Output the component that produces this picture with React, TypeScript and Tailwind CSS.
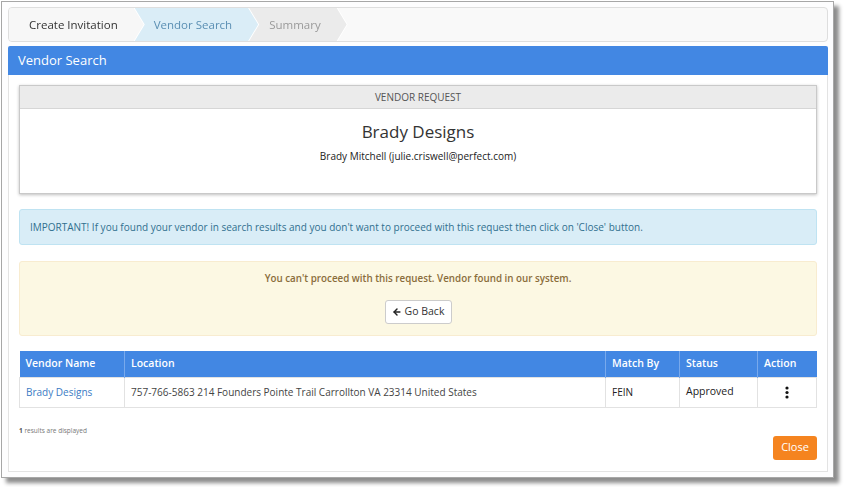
import { ArrowLeft } from 'lucide-react'

const steps = [
  { label: 'Create Invitation', bg: 'bg-[#f7f7f7]', text: 'text-[#333333]', pad: 'pl-[20px] pr-[26px]', z: 'z-30', first: true },
  { label: 'Vendor Search', bg: 'bg-[#daedf7]', text: 'text-[#5a8fb3]', pad: 'pl-[20px] pr-[26px]', z: 'z-20', first: false },
  { label: 'Summary', bg: 'bg-[#ebebeb]', text: 'text-[#9a9a9a]', pad: 'pl-[21px] pr-[26px]', z: 'z-10', first: false },
]

const rows = [
  {
    name: 'Brady Designs',
    location: '757-766-5863 214 Founders Pointe Trail Carrollton VA 23314 United States',
    matchBy: 'FEIN',
    status: 'Approved',
  },
]

function KebabIcon() {
  return (
    <svg width="4" height="13" viewBox="0 0 4 13" className="mx-auto">
      <circle cx="2" cy="2" r="1.6" fill="#111" />
      <circle cx="2" cy="6.5" r="1.6" fill="#111" />
      <circle cx="2" cy="11" r="1.6" fill="#111" />
    </svg>
  )
}

export default function App() {
  return (
    <div className="w-[846px] h-[487px] bg-white font-['Open_Sans',sans-serif]">
      <div className="ml-[1px] mt-[1px] w-[833px] h-[477px] border border-[#a7a7a7] bg-[#fdfdfe] shadow-[5px_5px_4px_rgba(0,0,0,0.45)] pl-[6px] pr-[5px] pt-[5px]">
        {/* wizard steps */}
        <div className="flex h-[35px] rounded-[4px] border border-[#dedede] bg-[#f9f9f9] overflow-hidden">
          {steps.map((s) => (
            <div key={s.label} className={`relative ${s.z} ${s.first ? '' : '-ml-[10px]'} [filter:drop-shadow(1px_0_0_#ffffff)]`}>
              <div
                className={`h-full flex items-center text-[11.5px] ${s.bg} ${s.text} ${s.pad} ${
                  s.first
                    ? '[clip-path:polygon(0_0,calc(100%-10px)_0,100%_50%,calc(100%-10px)_100%,0_100%)]'
                    : '[clip-path:polygon(0_0,calc(100%-10px)_0,100%_50%,calc(100%-10px)_100%,0_100%,10px_50%)]'
                }`}
              >
                {s.label}
              </div>
            </div>
          ))}
        </div>

        {/* panel */}
        <div className="mt-[4px]">
          <div className="h-[29px] bg-[#4287e3] rounded-t-[2px] flex items-center pl-[10px] text-[13px] text-white">
            Vendor Search
          </div>
          <div className="bg-white border border-t-0 border-[#e3e3e3] px-[10px] pt-[10px] pb-[11px]">
            {/* vendor request card */}
            <div className="border border-[#c9c9c9] shadow-[0_1px_3px_rgba(0,0,0,0.25)] bg-white">
              <div className="h-[23px] bg-[#ebebeb] border-b border-[#d6d6d6] flex items-center justify-center text-[10px] text-[#555555] uppercase">
                Vendor Request
              </div>
              <div className="h-[84px] flex flex-col items-center pt-[11px]">
                <div className="text-[17px] leading-[24px] text-[#333333]">Brady Designs</div>
                <div className="mt-[5px] text-[10px] leading-[14px] font-medium text-[#222222]">
                  Brady Mitchell (julie.criswell@perfect.com)
                </div>
              </div>
            </div>

            {/* info */}
            <div className="mt-[15px] h-[36px] rounded-[3px] border border-[#bfe3f2] bg-[#d9edf7] flex items-center pl-[10px] text-[10px] text-[#31708f]">
              IMPORTANT! If you found your vendor in search results and you don't want to proceed with this request then click on 'Close' button.
            </div>

            {/* warning */}
            <div className="mt-[16px] h-[75px] rounded-[3px] border border-[#f8ecd0] bg-[#fcf8e3] flex flex-col items-center pt-[10px]">
              <div className="text-[9.8px] leading-[14px] font-semibold text-[#8a6d3b]">
                You can't proceed with this request. Vendor found in our system.
              </div>
              <button className="mt-[14px] h-[24px] w-[67px] rounded-[3px] border border-[#cccccc] bg-white flex items-center justify-center gap-[3px] text-[10.5px] text-[#333333]">
                <ArrowLeft size={10} strokeWidth={3.5} className="text-[#222]" />
                Go Back
              </button>
            </div>

            {/* results */}
            <table className="mt-[15px] w-full border-collapse text-[10px]">
              <thead>
                <tr className="h-[26px] bg-[#4287e3] text-white text-left">
                  <th className="w-[105px] px-[6px] font-semibold text-[10.5px] border-r border-[#78a9ec]">Vendor Name</th>
                  <th className="px-[6px] font-semibold text-[10.5px] border-r border-[#78a9ec]">Location</th>
                  <th className="w-[74px] px-[6px] font-semibold text-[10.5px] border-r border-[#78a9ec]">Match By</th>
                  <th className="w-[78px] px-[6px] font-semibold text-[10.5px] border-r border-[#78a9ec]">Status</th>
                  <th className="w-[59px] px-[6px] font-semibold text-[10.5px]">Action</th>
                </tr>
              </thead>
              <tbody>
                {rows.map((r) => (
                  <tr key={r.name} className="h-[30px] bg-white">
                    <td className="px-[6px] border border-[#e2e2e2] text-[#3a7bc4]">{r.name}</td>
                    <td className="px-[6px] border border-[#e2e2e2] text-[#444444]">{r.location}</td>
                    <td className="px-[6px] border border-[#e2e2e2] text-[#222222]">{r.matchBy}</td>
                    <td className="px-[6px] border border-[#e2e2e2] text-[#222222] text-[10.5px]">{r.status}</td>
                    <td className="px-[6px] border border-[#e2e2e2] text-center">
                      <KebabIcon />
                    </td>
                  </tr>
                ))}
              </tbody>
            </table>

            <div className="mt-[19px] text-[6.5px] leading-[8px] text-[#777777]">
              <span className="font-bold text-[#555555]">1</span> results are displayed
            </div>
            <div className="flex justify-end">
              <button className="mt-[1px] h-[24px] w-[44px] rounded-[3px] bg-[#f5841f] text-white text-[11px]">
                Close
              </button>
            </div>
          </div>
        </div>
      </div>
    </div>
  )
}
